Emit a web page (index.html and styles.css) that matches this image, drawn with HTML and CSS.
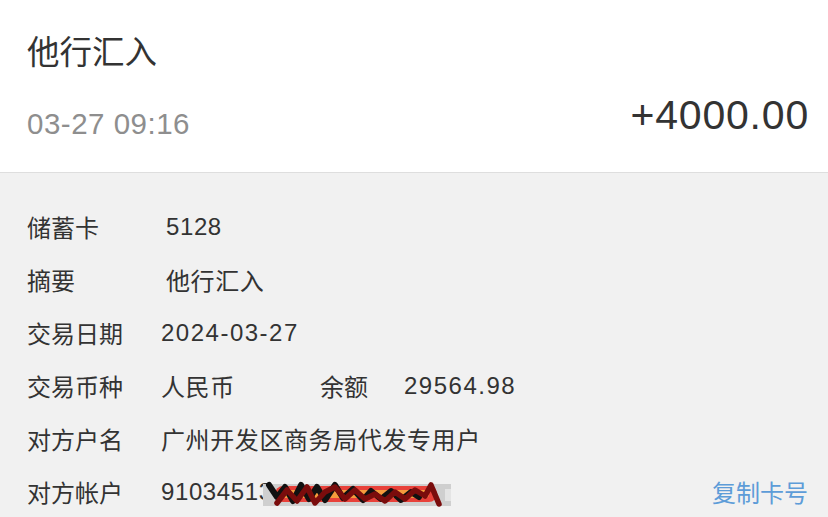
FILE: index.html
```html
<!DOCTYPE html>
<html lang="zh-CN">
<head>
<meta charset="utf-8">
<link rel="stylesheet" href="styles.css">
</head>
<body>
<div class="page">
  <header class="head">
    <div class="title">他行汇入</div>
    <div class="sum-row">
      <span class="time">03-27 09:16</span>
      <span class="amount">+4000.00</span>
    </div>
  </header>
  <section class="details">
    <div class="row"><span class="label">储蓄卡</span><span class="value shift">5128</span></div>
    <div class="row"><span class="label">摘要</span><span class="value shift">他行汇入</span></div>
    <div class="row"><span class="label">交易日期</span><span class="value num">2024-03-27</span></div>
    <div class="row"><span class="label">交易币种</span><span class="value currency">人民币</span><span class="label-inline">余额</span><span class="value num">29564.98</span></div>
    <div class="row"><span class="label">对方户名</span><span class="value">广州开发区商务局代发专用户</span></div>
    <div class="row"><span class="label">对方帐户</span>
      <span class="value acct">91034513
        <svg class="scribble" width="192" height="30" viewBox="0 0 192 30" aria-hidden="true">
          <rect x="0" y="4" width="188" height="22" fill="#cfcfcf"/>
          <rect x="182" y="9" width="6" height="12" fill="#e4e4e4"/>
          <rect x="12" y="6" width="162" height="16" rx="8" fill="#e8413a"/>
          <rect x="14" y="10" width="152" height="8" rx="4" fill="#f59a3c"/>
          <path d="M6 5 L14 17 L22 7 L30 21 L38 5 L46 19 L54 7 L62 20 L72 5 L80 18 L90 9 L100 20 L108 11 L118 19 L128 11 L138 20 L148 12 L156 17" fill="none" stroke="#111" stroke-width="6" stroke-linecap="round" stroke-linejoin="round"/>
          <path d="M14 23 L24 10 L34 21 L44 7 L52 23 L62 12 L72 7 L82 19 L92 10 L102 19 L112 14 L122 21 L132 12 L142 19 L152 10 L162 16 L168 5 L176 24" fill="none" stroke="#7a0c0c" stroke-width="5.5" stroke-linecap="round" stroke-linejoin="round"/>
        </svg>
      </span>
      <span class="copy">复制卡号</span>
    </div>
  </section>
</div>
</body>
</html>
```
FILE: styles.css
```css
* { box-sizing: border-box; }
html, body {
  margin: 0;
  padding: 0;
  background: #f1f1f1;
}
body {
  font-family: "Liberation Sans", "Noto Sans CJK SC", sans-serif;
  color: #333333;
  width: 828px;
  height: 517px;
  overflow: hidden;
}
.head {
  background: #ffffff;
  height: 173px;
  padding: 31px 20px 0 27px;
  border-bottom: 1px solid #dedede;
}
.title {
  font-size: 32.5px;
  line-height: 44px;
  color: #333333;
}
.sum-row {
  display: flex;
  justify-content: space-between;
  align-items: flex-start;
  line-height: 1;
}
.time {
  font-size: 29.5px;
  letter-spacing: 0.5px;
  color: #8e8e8e;
  margin-top: 34px;
}
.amount {
  font-size: 41px;
  letter-spacing: 0.8px;
  color: #333333;
  margin-top: 20px;
  margin-right: -1px;
}
.details {
  padding: 27px 20px 0 27px;
}
.row {
  display: flex;
  align-items: center;
  height: 53px;
  font-size: 24px;
  position: relative;
}
.label {
  width: 134px;
  flex: none;
}
.value {
  letter-spacing: 0.6px;
}
.num { letter-spacing: 1.5px; }
.shift { padding-left: 5px; }
.currency { width: 159px; }
.label-inline { width: 84px; }
.acct {
  position: relative;
}
.scribble {
  position: absolute;
  left: 102px;
  top: 2px;
}
.copy {
  margin-left: auto;
  color: #5d9cd8;
}
```
